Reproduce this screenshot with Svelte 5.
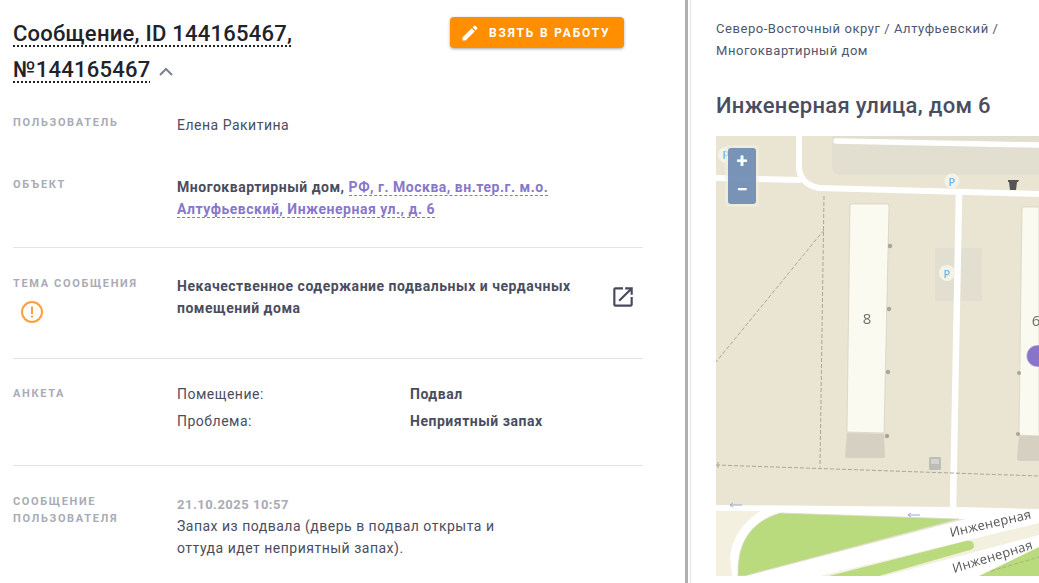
<script>
  const rows = [
    ['Помещение:', 'Подвал'],
    ['Проблема:', 'Неприятный запах']
  ];
</script>

<div class="page">
  <section class="left">
    <header class="head">
      <h1><span class="dotted">Сообщение, ID 144165467, №144165467</span>
        <svg class="chev" width="16" height="10" viewBox="0 0 16 10"><path d="M2 8l6-6 6 6" fill="none" stroke="#7a8092" stroke-width="2"/></svg>
      </h1>
      <button class="take">
        <svg width="20" height="20" viewBox="0 0 24 24"><path fill="#fff" d="M3 17.25V21h3.75L17.81 9.94l-3.75-3.75L3 17.25zM20.71 7.04a1 1 0 0 0 0-1.41l-2.34-2.34a1 1 0 0 0-1.41 0l-1.83 1.83 3.75 3.75 1.83-1.83z"/></svg>
        <span>ВЗЯТЬ В РАБОТУ</span>
      </button>
    </header>

    <div class="row r-user">
      <div class="label">ПОЛЬЗОВАТЕЛЬ</div>
      <div class="val">Елена Ракитина</div>
    </div>

    <div class="row r-obj">
      <div class="label">ОБЪЕКТ</div>
      <div class="val strong">Многоквартирный дом, <a href="#addr" class="addr">РФ, г. Москва, вн.тер.г. м.о. Алтуфьевский, Инженерная ул., д. 6</a></div>
    </div>

    <div class="row r-topic">
      <div class="label">ТЕМА СООБЩЕНИЯ
        <svg class="alert" width="24" height="24" viewBox="0 0 24 24">
          <circle cx="12" cy="12" r="10" fill="none" stroke="#ff9f3c" stroke-width="2"/>
          <rect x="11" y="6.5" width="2" height="7.5" fill="#ff9f3c"/>
          <rect x="11" y="15.5" width="2" height="2" fill="#ff9f3c"/>
        </svg>
      </div>
      <div class="val strong topic">Некачественное содержание подвальных и чердачных помещений дома</div>
      <svg class="ext" width="26" height="26" viewBox="0 0 24 24"><path fill="#454a5e" d="M19 19H5V5h7V3H5a2 2 0 0 0-2 2v14a2 2 0 0 0 2 2h14c1.1 0 2-.9 2-2v-7h-2v7zM14 3v2h3.59l-9.83 9.83 1.41 1.41L19 6.41V10h2V3h-7z"/></svg>
    </div>

    <div class="row r-form">
      <div class="label">АНКЕТА</div>
      <div class="pairs">
        {#each rows as r}
          <div class="val">{r[0]}</div><div class="val strong">{r[1]}</div>
        {/each}
      </div>
    </div>

    <div class="row r-msg">
      <div class="label two">СООБЩЕНИЕ ПОЛЬЗОВАТЕЛЯ</div>
      <div class="msg">
        <div class="date">21.10.2025 10:57</div>
        <div class="val">Запах из подвала (дверь в подвал открыта и оттуда идет неприятный запах).</div>
      </div>
    </div>
  </section>

  <div class="splitter"></div>

  <section class="right">
    <div class="crumbs">Северо-Восточный округ / Алтуфьевский / Многоквартирный дом</div>
    <h2>Инженерная улица, дом 6</h2>
    <div class="map">
      <svg class="canvas" width="323" height="440" viewBox="0 0 323 440">
        <rect width="323" height="440" fill="#eae5d2"/>
        <path d="M116 0H323V39H125Q116 39 116 30Z" fill="#e2dfd0"/>
        <rect x="219" y="112" width="47" height="53" rx="1" fill="#e2dfd0"/>
        <g fill="none" stroke="#fff" stroke-linecap="round">
          <path d="M120 5L323 9" stroke-width="5.5"/>
          <path d="M83 -5V30Q83 48 103 52L323 58" stroke-width="6"/>
          <path d="M-5 42L83 44" stroke-width="6"/>
          <path d="M243 58L237 372" stroke-width="6.5"/>
        </g>
        <g fill="none" stroke="#aaa699" stroke-width="1" stroke-dasharray="4 2">
          <path d="M108 60L104 331"/>
          <path d="M108 94L0 226"/>
          <path d="M0 329L323 340"/>
        </g>
        <path d="M2 326V332" stroke="#aaa699" fill="none"/>
        <!-- buildings -->
        <path d="M134 70Q134 68 136 68H171Q173 68 173 70L168 297L131 296Z" fill="#fbfaf1" stroke="#cdc9b9" stroke-width=".6"/>
        <path d="M131 297L168 298L169 320Q169 322 167 322H131Q129 322 129 320Z" fill="#d5d0c2"/>
        <path d="M306 73Q306 71 308 71H323V300L303 299Z" fill="#fbfaf1" stroke="#cdc9b9" stroke-width=".6"/>
        <path d="M303 300H323V325H305Q301 325 301 322Z" fill="#d5d0c2"/>
        <g fill="#a9a597">
          <circle cx="174" cy="110" r="2.2"/><circle cx="173" cy="173" r="2.2"/><circle cx="172" cy="236" r="2.2"/><circle cx="171" cy="300" r="2.2"/>
          <circle cx="303" cy="237" r="2"/><circle cx="302" cy="298" r="2"/>
        </g>
        <text x="151" y="188" class="num" text-anchor="middle">8</text>
        <text x="320" y="190" class="num" text-anchor="middle">6</text>
        <!-- parking -->
        <circle cx="10" cy="19" r="8" fill="#f5f3e8"/><text x="10" y="23" class="p" text-anchor="middle">P</text>
        <circle cx="236" cy="45" r="7.5" fill="#f5f3e8"/><text x="236" y="49.5" class="p" text-anchor="middle">P</text>
        <circle cx="231" cy="137" r="8" fill="#f5f3e8"/><text x="231" y="142" class="p" text-anchor="middle">P</text>
        <!-- trash -->
        <path d="M292 44h11l-1 2h-1l-1 8h-6l-1-8h-1z" fill="#555"/>
        <rect x="296" y="48" width="3" height="6" fill="#555"/>
        <!-- small kiosk -->
        <rect x="213" y="321" width="12" height="13" rx="1.5" fill="#bdbdb8"/>
        <rect x="215" y="323" width="8" height="5" fill="#d4d4cf"/>
        <!-- lower roads -->
        <path d="M0 369L240 371L323 373V440H0Z" fill="#fff"/>
        <path d="M0 375H44Q18 392 14 420L16 440H0Z" fill="#f3f0e0"/>
        <path d="M20 440L243 383L250 383L30 440Z" fill="#ece8d6"/>
        <path d="M22 440Q20 390 64 377L243 383L28 440Z" fill="#b9db7e" stroke="#dcd9c8" stroke-width=".8"/>
        <path d="M323 387L104 440H169L259 416L323 399Z" fill="#f3f0e0"/>
        <path d="M113 440L250 405Q258 404 258 410Q258 414 250 415L163 440Z" fill="#b9db7e"/>
        <path d="M323 411L263 440H323Z" fill="#b9db7e"/>
        <path d="M275 435L323 421" stroke="#9aa37a" stroke-width=".7" stroke-dasharray="4 2" fill="none"/>
        <g stroke="#9aa8d8" stroke-width="1" fill="none">
          <path d="M14 369H26M14 369l3-2M14 369l3 2"/>
          <path d="M192 379H204M192 379l3-2M192 379l3 2"/>
        </g>
        <text class="road" transform="translate(235 401) rotate(-13)">Инженерная</text>
        <text class="road" transform="translate(238 437) rotate(-17)">Инженерная</text>
        <circle cx="321.5" cy="220" r="11" fill="#8a74c9" stroke="#efedf6" stroke-width=".7"/>
      </svg>
      <div class="zoom">
        <div class="zbtn plus">+</div>
        <div class="zbtn minus">−</div>
      </div>
    </div>
  </section>
</div>

<style>
  :global(body) { margin: 0; background: #fff; overflow: hidden; }
  .page { display: flex; width: 1039px; height: 583px; overflow: hidden; font-family: Roboto, "Liberation Sans", sans-serif; color: #4a4d5e; font-size: 14px; }
  .left { width: 685px; box-sizing: border-box; padding: 16px 42px 0 13px; flex: none; }
  .splitter { width: 2px; flex: none; border-left: 3px solid #b1afb6; border-right: 1px solid #e4e4e6; }
  .right { flex: 1; min-width: 0; padding: 18px 0 0 25px; }

  .head { display: flex; align-items: flex-start; justify-content: space-between; padding-right: 19px; }
  h1 { margin: 0; width: 300px; font-size: 22px; font-weight: 500; line-height: 36px; letter-spacing: .25px; color: #212328; }
  .dotted { text-decoration: underline dotted 2px #212328; text-underline-offset: 4px; }
  .chev { margin-left: 2px; vertical-align: 0; }
  .take { display: flex; align-items: center; gap: 9px; height: 31px; width: 174px; margin-top: 1px; padding: 0 0 0 10px; box-sizing: border-box; background: #ff8f00; color: #fff; border: 0; border-radius: 4px; box-shadow: 0 1px 3px rgba(0,0,0,.35); font: 700 12px Roboto, sans-serif; letter-spacing: 1.82px; white-space: nowrap; }

  .row { display: grid; grid-template-columns: 164px 1fr; }
  .label { font-size: 11px; font-weight: 700; letter-spacing: 1.65px; color: #a9abb6; line-height: 17px; }
  .val { line-height: 22px; letter-spacing: .5px; }
  .strong { font-weight: 700; letter-spacing: .52px; }
  .addr { color: #8877c9; text-decoration: none; border-bottom: 1px dashed #8877c9; }

  .r-user { margin-top: 26px; }
  .r-obj { margin-top: 40px; padding-bottom: 27px; border-bottom: 1px solid #e3e3e3; }
  .r-obj .val { max-width: 400px; }
  .r-topic { padding: 27px 0 34px; border-bottom: 1px solid #e3e3e3; position: relative; }
  .alert { display: block; margin: 8px 0 0 7px; }
  .topic { max-width: 410px; }
  .ext { position: absolute; left: 597px; top: 36px; }
  .r-form { padding: 24px 0 33px; border-bottom: 1px solid #e3e3e3; }
  .r-form .label { margin-top: 2px; }
  .pairs { display: grid; grid-template-columns: 233px 1fr; row-gap: 5px; }
  .r-msg { padding-top: 27px; }
  .label.two { width: 110px; }
  .msg .date { font-size: 13px; font-weight: 700; color: #a9abb6; letter-spacing: .5px; line-height: 21px; margin-top: 1px; }
  .msg .val { max-width: 330px; }

  .crumbs { font-size: 13px; line-height: 22px; letter-spacing: .55px; color: #4f5670; width: 310px; }
  h2 { margin: 29px 0 0; font-size: 22px; font-weight: 500; line-height: 30px; color: #4a4d5e; letter-spacing: .3px; }
  .map { position: relative; margin-top: 15px; width: 323px; height: 440px; overflow: hidden; }
  .canvas { display: block; filter: blur(.4px); }
  .num { font: 15px "Open Sans", sans-serif; fill: #6f6f6a; }
  .p { font: 600 11px "Open Sans", sans-serif; fill: #6db7ec; }
  .road { font: 13px "Open Sans", sans-serif; fill: #565656; letter-spacing: .2px; }
  .zoom { position: absolute; left: 9px; top: 9px; padding: 3px; border-radius: 4px; background: rgba(240,238,225,.6); }
  .zbtn { width: 28px; height: 28px; background: rgba(104,134,176,.88); color: #fff; font: 700 20px/27px Roboto, sans-serif; text-align: center; }
  .plus { border-radius: 3px 3px 0 0; }
  .minus { border-radius: 0 0 3px 3px; }
</style>
